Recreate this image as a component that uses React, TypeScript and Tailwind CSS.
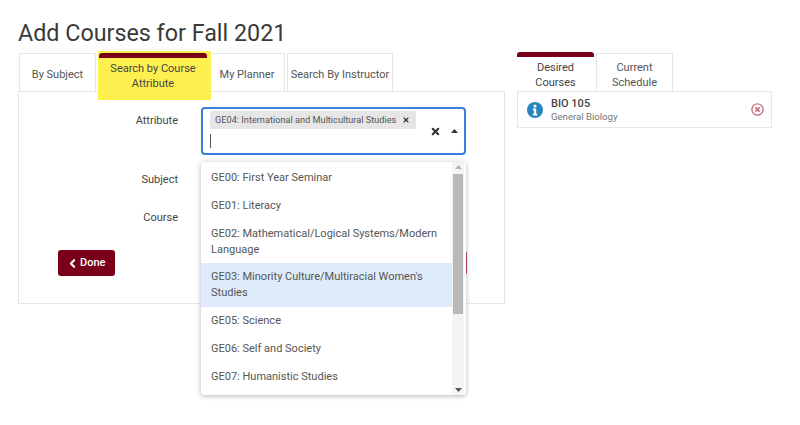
import { ChevronLeft, X } from "lucide-react";

const options = [
    { id: "ge00", label: "GE00: First Year Seminar", className: "" },
    { id: "ge01", label: "GE01: Literacy", className: "" },
    { id: "ge02", label: "GE02: Mathematical/Logical Systems/Modern Language", className: "pb-[5px]" },
    { id: "ge03", label: "GE03: Minority Culture/Multiracial Women's Studies", className: "bg-[#deebfb]" },
    { id: "ge05", label: "GE05: Science", className: "" },
    { id: "ge06", label: "GE06: Self and Society", className: "" },
    { id: "ge07", label: "GE07: Humanistic Studies", className: "" },
];

const Tab = ({ label, className }: { label: string; className: string }) => (
    <div
        className={`flex items-center justify-center h-[38px] pt-[4px] text-center text-[11px] leading-[15px] text-[#555] bg-white border border-b-0 border-[#e6e6e6] ${className}`}
    >
        {label}
    </div>
);

const ActiveTab = ({ label, className }: { label: string; className: string }) => (
    <div
        className={`flex items-center justify-center h-[39px] pt-[1px] text-center text-[11px] leading-[15px] text-[#444] border-t-[5px] border-[#7a0019] rounded-t-[3px] ${className}`}
    >
        {label}
    </div>
);

const Dropdown = () => (
    <div className="absolute -left-[2px] top-[53px] w-[265px] h-[233px] flex bg-white rounded-[3px] shadow-[0_1px_5px_rgba(0,0,0,0.3)] overflow-hidden z-10">
        <div className="flex-1 pt-[2px]">
            {options.map((o) => (
                <div
                    key={o.id}
                    className={`px-[10px] py-[6px] text-[11px] leading-[16px] text-[#555] ${o.className}`}
                >
                    {o.label}
                </div>
            ))}
        </div>
        <div className="w-[12px] mr-[2px] flex flex-col items-center justify-between bg-[#f4f4f4] py-[3px]">
            <svg width="7" height="4" viewBox="0 0 7 4"><path d="M3.5 0 7 4H0z" fill="#b5b5b5" /></svg>
            <div className="w-[10px] h-[140px] mt-[1px] mb-[70px] bg-[#b9b9b9]" />
            <svg width="7" height="4" viewBox="0 0 7 4"><path d="M0 0h7L3.5 4z" fill="#555" /></svg>
        </div>
    </div>
);

const App = () => {
    return (
        <div className="w-[800px] h-[425px] overflow-hidden bg-white pl-[18px] font-['Roboto',sans-serif]">
            <h1 className="pt-[17px] h-[53px] text-[23.3px] leading-[32px] font-normal text-[#3a3a3a]">
                Add Courses for Fall 2021
            </h1>
            <div className="flex items-start">
                <div className="w-[487px] shrink-0">
                    <div className="flex items-end h-[38px] pl-px">
                        <Tab label="By Subject" className="w-[77px]" />
                        <div className="relative w-[113px] -mb-[9px] -mt-[2px] h-[49px] ml-[2px] mr-[-2px] bg-[#fdf04f] pl-px pr-[6px]">
                            <ActiveTab label="Search by Course Attribute" className="w-[108px] mt-[2px]" />
                        </div>
                        <Tab label="My Planner" className="w-[76px]" />
                        <Tab label="Search By Instructor" className="w-[106px] ml-[2px]" />
                    </div>
                    <div className="h-[213px] border border-[#e6e6e6] pt-[15px] text-[11px] text-[#444]">
                        <div className="flex items-start h-[61px]">
                            <div className="w-[159px] text-right leading-[28px]">Attribute</div>
                            <div className="relative ml-[23px] w-[265px] h-[48px] border-2 border-[#3b7ddd] rounded-[4px] bg-white">
                                <div className="flex items-center justify-between w-[206px] h-[18px] mt-[2px] ml-[7px] pl-[5px] pr-[6px] bg-[#e6e6e6] rounded-[2px] text-[9.2px] text-[#555]">
                                    <span>GE04: International and Multicultural Studies</span>
                                    <X size={8} strokeWidth={3.5} className="text-[#333]" />
                                </div>
                                <div className="w-px h-[14px] mt-[5px] ml-[7px] bg-[#555]" />
                                <X size={11} strokeWidth={4.5} className="absolute left-[227px] top-[17px] text-[#333]" />
                                <svg className="absolute left-[248px] top-[20px]" width="7" height="4" viewBox="0 0 7 4">
                                    <path d="M3.5 0 7 4H0z" fill="#333" />
                                </svg>
                                <Dropdown />
                            </div>
                        </div>
                        <div className="h-[38px] w-[159px] text-right leading-[24px]">Subject</div>
                        <div className="h-[34px] w-[159px] text-right leading-[24px]">Course</div>
                        <div className="flex items-center justify-between w-[409px] ml-[39px] mt-[10px]">
                            <button className="flex items-center gap-[1px] w-[57px] h-[26px] pl-[8px] bg-[#7a0019] rounded-[3px] text-[11px] font-medium text-white">
                                <ChevronLeft size={13} strokeWidth={4} />
                                Done
                            </button>
                            <div className="w-[20px] h-[24px] bg-[#b5495b] rounded-[3px]" />
                        </div>
                    </div>
                </div>
                <div className="ml-[12px] w-[255px] shrink-0">
                    <div className="flex items-end h-[38px]">
                        <ActiveTab label="Desired Courses" className="w-[77px] bg-white" />
                        <Tab label="Current Schedule" className="w-[77px] ml-[2px]" />
                    </div>
                    <div className="flex items-center h-[37px] border border-[#e6e6e6] pl-[9px] pr-[7px]">
                        <svg width="16" height="16" viewBox="0 0 16 16">
                            <circle cx="8" cy="8" r="8" fill="#2a85bd" />
                            <circle cx="8" cy="4" r="1.6" fill="#fff" />
                            <path d="M5.8 6.6h3.4v5.2h1.1v1.6H5.8v-1.6h1.1V8.2H5.8z" fill="#fff" />
                        </svg>
                        <div className="flex-1 ml-[8px] pt-[1px]">
                            <div className="text-[11px] leading-[14px] font-medium text-[#444]">BIO 105</div>
                            <div className="text-[9.6px] leading-[12px] text-[#777]">General Biology</div>
                        </div>
                        <svg width="13" height="13" viewBox="0 0 13 13" fill="none" stroke="#c9737f">
                            <circle cx="6.5" cy="6.5" r="5.6" strokeWidth="1.4" />
                            <path d="M4.4 4.4l4.2 4.2M8.6 4.4l-4.2 4.2" strokeWidth="1.8" />
                        </svg>
                    </div>
                </div>
            </div>
        </div>
    );
};

export default App;
